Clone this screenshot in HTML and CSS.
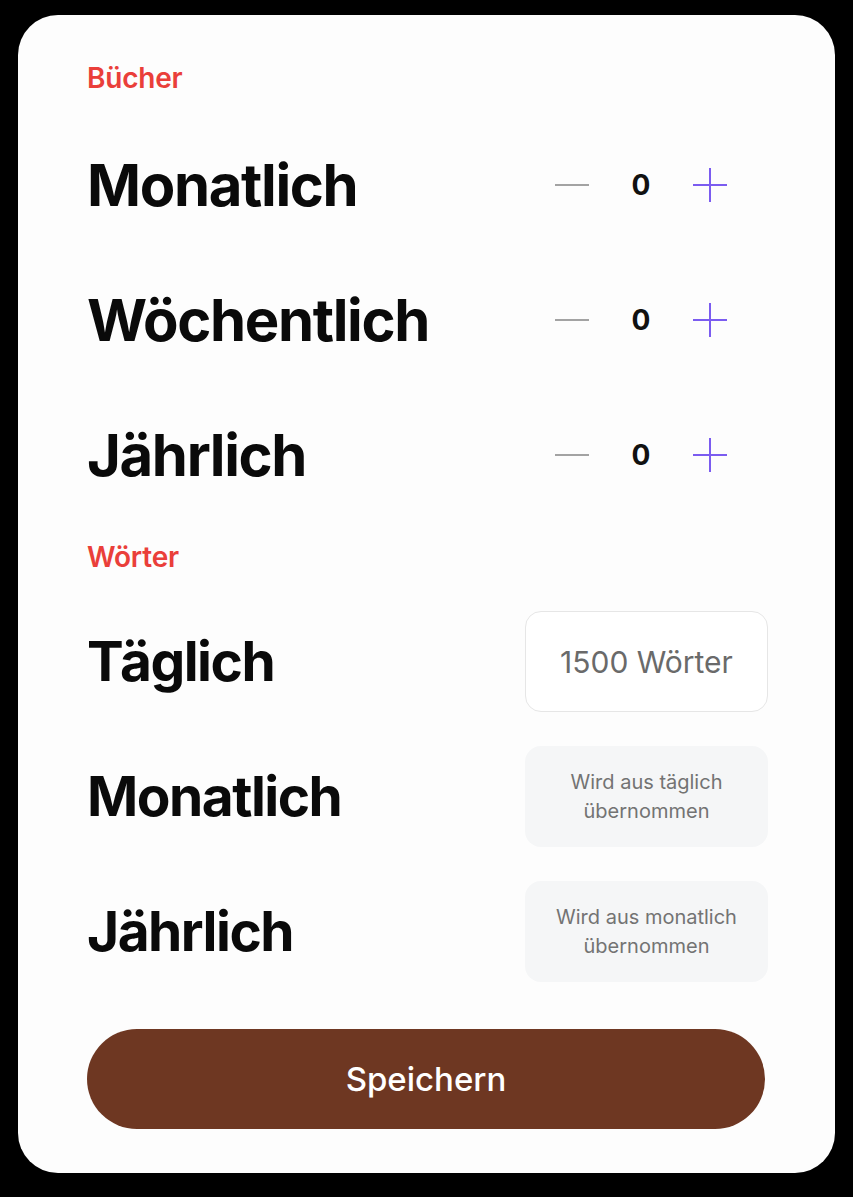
FILE: index.html
```html
<!DOCTYPE html>
<html lang="de">
<head>
<meta charset="utf-8">
<title>Ziele</title>
<link rel="stylesheet" href="styles.css">
</head>
<body>
<div class="card">
  <div class="section-label label-books">Bücher</div>
  <div class="books">
    <div class="row">
      <span class="title">Monatlich</span>
      <div class="stepper">
        <span class="minus"></span>
        <span class="value">0</span>
        <svg class="plus" width="34" height="34" viewBox="0 0 34 34"><path d="M17 0V34M0 17H34" stroke="#7b5cf0" stroke-width="2" fill="none"/></svg>
      </div>
    </div>
    <div class="row">
      <span class="title">Wöchentlich</span>
      <div class="stepper">
        <span class="minus"></span>
        <span class="value">0</span>
        <svg class="plus" width="34" height="34" viewBox="0 0 34 34"><path d="M17 0V34M0 17H34" stroke="#7b5cf0" stroke-width="2" fill="none"/></svg>
      </div>
    </div>
    <div class="row">
      <span class="title">Jährlich</span>
      <div class="stepper">
        <span class="minus"></span>
        <span class="value">0</span>
        <svg class="plus" width="34" height="34" viewBox="0 0 34 34"><path d="M17 0V34M0 17H34" stroke="#7b5cf0" stroke-width="2" fill="none"/></svg>
      </div>
    </div>
  </div>
  <div class="section-label label-words">Wörter</div>
  <div class="words">
    <div class="wrow">
      <span class="title small">Täglich</span>
      <div class="box input">1500 Wörter</div>
    </div>
    <div class="wrow">
      <span class="title small">Monatlich</span>
      <div class="box derived">Wird aus täglich<br>übernommen</div>
    </div>
    <div class="wrow">
      <span class="title small">Jährlich</span>
      <div class="box derived">Wird aus monatlich<br>übernommen</div>
    </div>
  </div>
  <button class="save">Speichern</button>
</div>
</body>
</html>
```
FILE: styles.css
```css
* { box-sizing: border-box; }
html, body { margin: 0; padding: 0; background: #000; }
body {
  width: 853px;
  height: 1197px;
  padding: 15px 0 0 18px;
  font-family: Inter, "Noto Sans", sans-serif;
}
.card {
  width: 817px;
  height: 1158px;
  background: #fdfdfd;
  border-radius: 40px;
  padding: 47px 67px 0 69px;
  display: flex;
  flex-direction: column;
}
.section-label {
  color: #ea3f3a;
  font-size: 28px;
  font-weight: 600;
  line-height: 32px;
  height: 32px;
  letter-spacing: -0.2px;
}
.books { margin-top: 23px; display: flex; flex-direction: column; }
.row {
  height: 135px;
  display: flex;
  align-items: center;
  justify-content: space-between;
}
.title {
  font-size: 58px;
  font-weight: 700;
  color: #0a0a0a;
  letter-spacing: -1.35px;
  line-height: 1;
}
.title.small { font-size: 55px; letter-spacing: -1.5px; }
.stepper {
  display: flex;
  align-items: center;
  gap: 42px;
  margin-right: 41px;
}
.minus {
  width: 34px;
  height: 2px;
  background: #a3a3a3;
}
.value {
  width: 20px;
  text-align: center;
  font-size: 28px;
  font-weight: 700;
  color: #111;
}
.plus { display: block; }
.label-words { margin-top: 19px; }
.words {
  margin-top: 38px;
  display: flex;
  flex-direction: column;
  gap: 34px;
}
.wrow {
  height: 101px;
  display: flex;
  align-items: center;
  justify-content: space-between;
}
.box {
  width: 243px;
  height: 101px;
  border-radius: 16px;
  display: flex;
  align-items: center;
  justify-content: center;
  text-align: center;
}
.input {
  border: 1.5px solid #e6e6e6;
  background: #fff;
  color: #6a6a6a;
  font-size: 30px;
}
.derived {
  background: #f5f6f7;
  color: #737373;
  font-size: 20px;
  line-height: 29px;
}
.save {
  margin-top: 47px;
  width: 678px;
  height: 100px;
  border: none;
  border-radius: 50px;
  background: #6e3722;
  color: #fff;
  font-family: Inter, "Noto Sans", sans-serif;
  font-size: 33px;
  font-weight: 500;
  padding: 0;
}
```
